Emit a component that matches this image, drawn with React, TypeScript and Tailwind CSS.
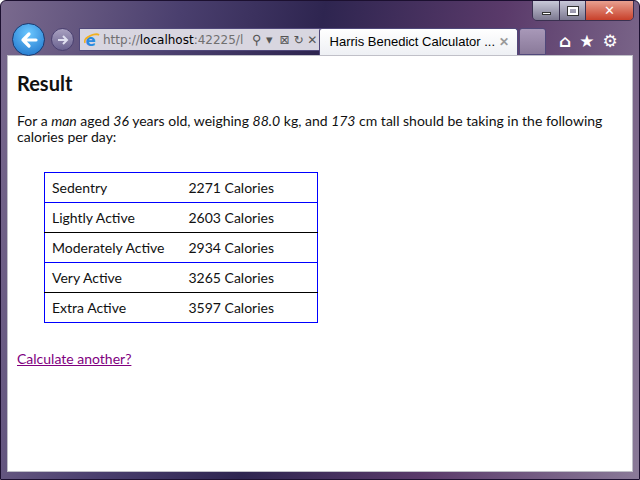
import React from "react";

const IeLogo = ({ s = 16 }: { s?: number }) => (
  <svg width={s} height={s} viewBox="0 0 16 16">
    <text x="1.5" y="13.5" fontSize="15" fontFamily="DejaVu Sans" fontWeight="bold" fill="#2a8ae0">e</text>
    <path d="M1 11 C-1 4 12 1 15 3 C13 1 5 3 2 7" stroke="#f0b020" strokeWidth="1.6" fill="none" />
  </svg>
);

export default function App() {
  const rows = [
    ["Sedentry", "2271 Calories"],
    ["Lightly Active", "2603 Calories"],
    ["Moderately Active", "2934 Calories"],
    ["Very Active", "3265 Calories"],
    ["Extra Active", "3597 Calories"],
  ];
  return (
    <div className="w-[640px] h-[480px] overflow-hidden flex flex-col rounded-t-[6px] bg-[linear-gradient(100deg,#7a6a8e_0%,#4a3f6e_25%,#2e2550_45%,#5a3a6a_70%,#8a7a98_100%)] px-[6px] pb-[7px] border border-[#1c1030]" style={{ fontFamily: "'DejaVu Sans', sans-serif" }}>
      <div className="h-[54px] relative shrink-0">
        <div className="absolute right-[-1px] top-[-1px] flex h-[21px] border border-[#3a3050] rounded-b-[5px] overflow-hidden">
          <div className="w-[27px] bg-[linear-gradient(#c8c8d8,#7c7890)] border-r border-[#3a3050] flex items-end justify-center pb-[5px]"><div className="w-[9px] h-[3px] bg-white border border-[#333]" /></div>
          <div className="w-[26px] bg-[linear-gradient(#c8c8d8,#7c7890)] border-r border-[#3a3050] flex items-center justify-center"><div className="w-[10px] h-[8px] border-2 border-white outline outline-1 outline-[#333]" /></div>
          <div className="w-[47px] bg-[linear-gradient(#e8a090,#c8402a)] flex items-center justify-center text-white font-bold text-[13px]">✕</div>
        </div>
        <div className="absolute left-[5px] top-[22px] w-[33px] h-[33px] rounded-full bg-[radial-gradient(circle_at_50%_30%,#6cc8ff,#1a6fc8)] border border-[#1a3a70] flex items-center justify-center">
          <svg width="18" height="18" viewBox="0 0 18 18"><path d="M16 9H3M9 3L3 9l6 6" stroke="white" strokeWidth="3.2" fill="none" strokeLinecap="round" strokeLinejoin="round" /></svg>
        </div>
        <div className="absolute left-[44px] top-[27px] w-[23px] h-[23px] rounded-full bg-[linear-gradient(#a8a0c0,#6a6290)] border border-[#4a4070] flex items-center justify-center">
          <svg width="12" height="12" viewBox="0 0 12 12"><path d="M1 6h9M6 2l4 4-4 4" stroke="#e0e0f0" strokeWidth="2" fill="none" /></svg>
        </div>
        <div className="absolute left-[72px] top-[27px] w-[243px] h-[23px] bg-[#d8d6e0] border border-[#50487a] flex items-center pl-[4px] gap-[3px] text-[12px]">
          <IeLogo />
          <span className="text-[#707070] w-[146px] overflow-hidden whitespace-nowrap">http://<span className="text-black">localhost</span>:42225/l</span>
          <span className="text-[#555] text-[13px] font-bold">⚲ ▾</span>
          <span className="text-[#555] text-[12px] ml-[4px]">⊠ ↻ ✕</span>
        </div>
        <div className="absolute left-[312px] top-[27px] w-[199px] h-[27px] bg-[linear-gradient(#ffffff,#eef0f4)] border border-[#50487a] border-b-0 rounded-t-[3px] flex items-center pl-[5px] gap-[4px] text-[12px] text-black" style={{ fontFamily: "'Liberation Sans', sans-serif" }}>
          <IeLogo />
          <span className="whitespace-nowrap text-[13px]">Harris Benedict Calculator ...</span>
          <span className="ml-auto mr-[8px] text-[#999] font-bold">✕</span>
        </div>
        <div className="absolute left-[512px] top-[27px] w-[27px] h-[27px] bg-[linear-gradient(#a898b8,#8a7a9a)] border border-[#50487a] rounded-t-[3px]" />
        <div className="absolute left-[552px] top-[28px] flex gap-[8px] text-white text-[17px] font-bold">
          <span>⌂</span><span>★</span><span>⚙</span>
        </div>
      </div>
      <div className="flex-1 bg-white border border-[#c0c0c8] px-[9px] pt-[13px] text-[14px] text-[#111] leading-[16px]" style={{ fontFamily: "Lato, sans-serif" }}>
        <h1 className="text-[20px] font-bold leading-[28px] mb-[16px]">Result</h1>
        <p>For a <i>man</i> aged <i>36</i> years old, weighing <i>88.0</i> kg, and <i>173</i> cm tall should be taking in the following calories per day:</p>
        <table className="ml-[27px] mt-[27px] w-[274px] table-fixed border-collapse border border-[#0000ff]">
          <tbody>
            {rows.map((r, i) => (
              <tr key={i} className={`h-[30px] border-b ${i % 2 === 0 ? "border-[#0000ff]" : "border-black"}`}>
                <td className="pl-[7px] w-[144px] whitespace-nowrap">{r[0]}</td>
                <td className="whitespace-nowrap">{r[1]}</td>
              </tr>
            ))}
          </tbody>
        </table>
        <a className="inline-block mt-[28px] text-[#800080] underline">Calculate another?</a>
      </div>
    </div>
  );
}
